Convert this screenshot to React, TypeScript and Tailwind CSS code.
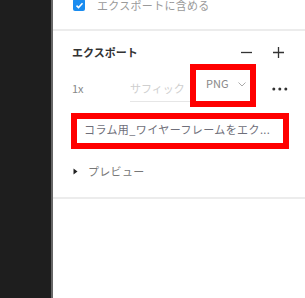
import React from 'react';

const font = { fontFamily: '"Noto Sans CJK JP", "Noto Sans", sans-serif' };

function Minus() {
  return (
    <svg width="13" height="13" viewBox="0 0 13 13">
      <path d="M1 6.5h11" stroke="#333" strokeWidth="1.3" />
    </svg>
  );
}

function Plus() {
  return (
    <svg width="13" height="13" viewBox="0 0 13 13">
      <path d="M1 6.5h11M6.5 1v11" stroke="#333" strokeWidth="1.3" />
    </svg>
  );
}

export default function App() {
  return (
    <div className="flex h-[298px] w-[305px] overflow-hidden bg-white text-[11px]" style={font}>
      <div className="w-[51px] shrink-0 border-r-2 border-[#666] bg-[#1e1e1e] box-content" />

      <div className="flex-1">
        {/* include in export */}
        <div className="flex h-[31px] flex-col border-b-2 border-[#ececec]">
          <div className="-mt-[4px] flex h-[18px] items-center pl-[20px]">
            <div className="flex h-[12px] w-[12px] items-center justify-center rounded-[2px] bg-[#1a8cf0]">
              <svg width="9" height="9" viewBox="0 0 9 9">
                <path d="M1.5 4.6l2 2 4-4.4" fill="none" stroke="#fff" strokeWidth="1.5" />
              </svg>
            </div>
            <span className="ml-[12px] tracking-[0.3px] text-[#9a9a9a]">エクスポートに含める</span>
          </div>
        </div>

        {/* export */}
        <div className="border-b-2 border-[#ececec] pt-[10px] pb-[16px]">
          <div className="flex h-[23px] items-center pl-[19px] pr-[20px]">
            <span className="font-bold text-[#333]">エクスポート</span>
            <div className="ml-auto flex items-center gap-[19px]">
              <Minus />
              <Plus />
            </div>
          </div>

          <div className="flex h-[43px] items-center pl-[19px]">
            <span className="mt-[6px] w-[58px] text-[#888]">1x</span>
            <div className="mt-[6px] flex h-[26px] w-[60px] items-center whitespace-nowrap border-b border-[#e6e6e6] text-[#cfcfcf]">
              サフィック
            </div>
            <div className="flex h-[43px] w-[66px] items-center border-[6px] border-[#ff0000] pl-[10px] text-[#888]">
              <span className="-mt-[4px]">PNG</span>
              <svg className="-mt-[3px] ml-[9px]" width="8" height="5" viewBox="0 0 8 5">
                <path d="M0.5 0.5l3.5 3.5 3.5-3.5" fill="none" stroke="#aaa" strokeWidth="1" />
              </svg>
            </div>
            <svg className="mt-[6px] ml-[16px]" width="16" height="4" viewBox="0 0 16 4">
              <circle cx="1.8" cy="2" r="1.5" fill="#333" />
              <circle cx="7.8" cy="2" r="1.5" fill="#333" />
              <circle cx="13.8" cy="2" r="1.5" fill="#333" />
            </svg>
          </div>

          <div className="ml-[18px] mt-[6px] flex h-[36px] w-[218px] items-center border-[6px] border-[#ff0000] pl-[7px] text-[#6f6f7a]">
            <span className="-mt-[3px] whitespace-nowrap tracking-[0.4px]">コラム用_ワイヤーフレームをエク...</span>
          </div>

          <div className="mt-[12px] flex h-[20px] items-center pl-[20px]">
            <svg width="5" height="7" viewBox="0 0 5 7">
              <path d="M0.5 0.5L4.5 3.5L0.5 6.5Z" fill="#222" />
            </svg>
            <span className="ml-[10px] tracking-[0.3px] text-[#777]">プレビュー</span>
          </div>
        </div>
      </div>
    </div>
  );
}
